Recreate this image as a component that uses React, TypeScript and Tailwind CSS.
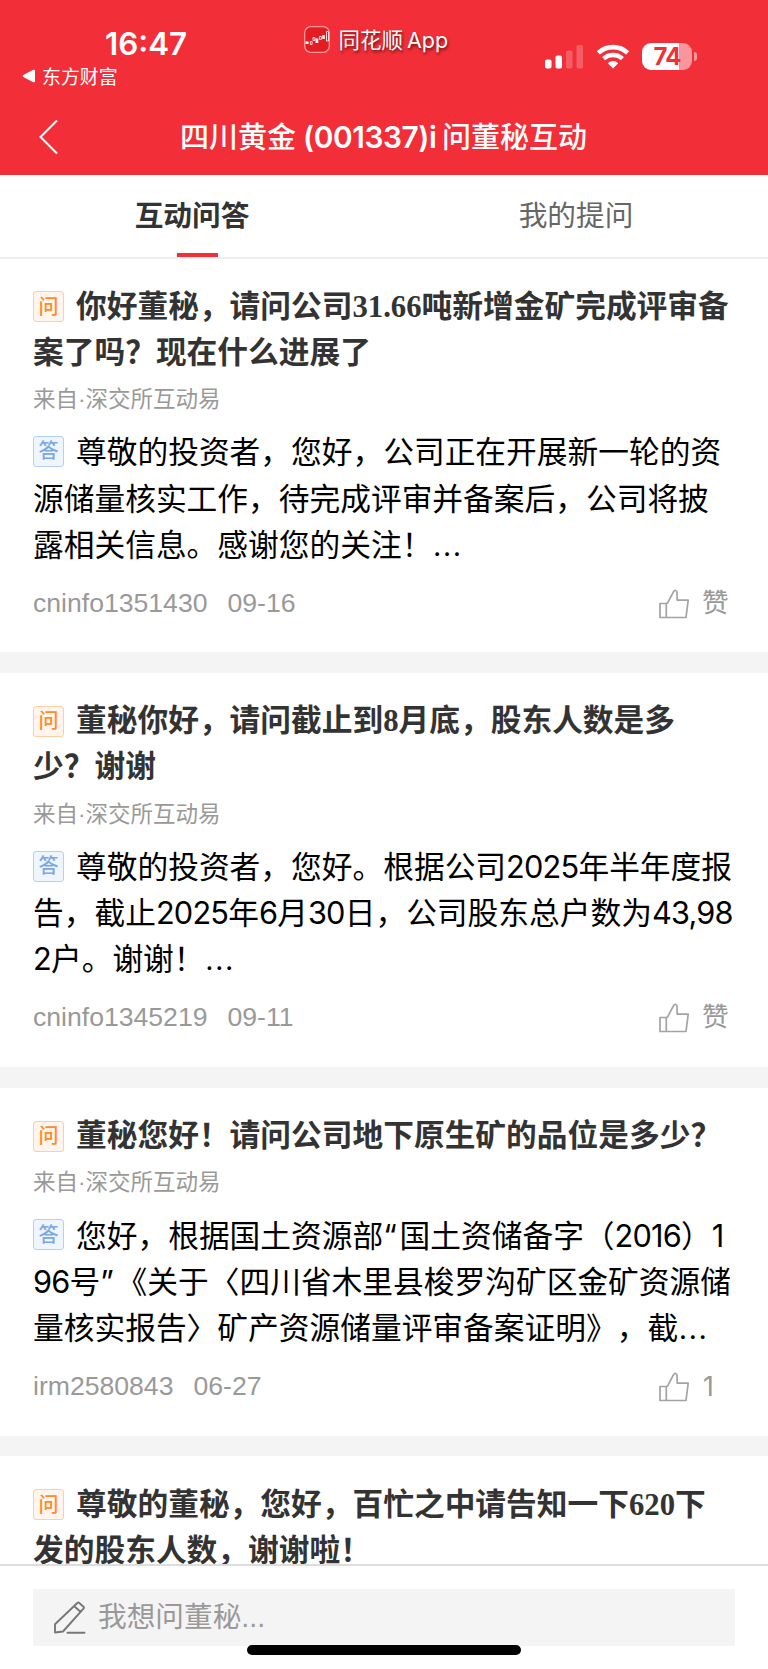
import React from "react";

type Seg = string | { n: string };
type Item = {
  q: string[];
  a?: Seg[][];
  user?: string;
  date?: string;
  likes?: string;
};

const items: Item[] = [
  {
    q: ["你好董秘，请问公司31.66吨新增金矿完成评审备", "案了吗？现在什么进展了"],
    a: [
      ["尊敬的投资者，您好，公司正在开展新一轮的资"],
      ["源储量核实工作，待完成评审并备案后，公司将披"],
      ["露相关信息。感谢您的关注！", { n: "…" }],
    ],
    user: "cninfo1351430",
    date: "09-16",
    likes: "赞",
  },
  {
    q: ["董秘你好，请问截止到8月底，股东人数是多", "少？谢谢"],
    a: [
      ["尊敬的投资者，您好。根据公司", { n: "2025" }, "年半年度报"],
      ["告，截止", { n: "2025" }, "年", { n: "6" }, "月", { n: "30" }, "日，公司股东总户数为", { n: "43,98" }],
      [{ n: "2" }, "户。谢谢！", { n: "…" }],
    ],
    user: "cninfo1345219",
    date: "09-11",
    likes: "赞",
  },
  {
    q: ["董秘您好！请问公司地下原生矿的品位是多少？"],
    a: [
      ["您好，根据国土资源部", { n: "“" }, "国土资储备字（", { n: "2016" }, "）", { n: "1" }],
      [{ n: "96" }, "号", { n: "”" }, "《关于〈四川省木里县梭罗沟矿区金矿资源储"],
      ["量核实报告〉矿产资源储量评审备案证明》，截", { n: "…" }],
    ],
    user: "irm2580843",
    date: "06-27",
    likes: "1",
  },
  { q: ["尊敬的董秘，您好，百忙之中请告知一下620下", "发的股东人数，谢谢啦！"] },
];

function Badge({ kind }: { kind: "q" | "a" }) {
  const tone =
    kind === "q"
      ? "border-[#ffcfa3] bg-[#fff5ec] text-[#ff8a2b]"
      : "border-[#b5d0f4] bg-[#eff5fd] text-[#7aa7e6]";
  return (
    <span
      className={`mr-[12px] flex h-[31px] w-[31px] shrink-0 items-center justify-center rounded-[3px] border pb-[2px] text-[20px] leading-none font-medium font-['Noto_Sans_CJK_SC',sans-serif] ${tone}`}
    >
      {kind === "q" ? "问" : "答"}
    </span>
  );
}

function Latin({ text }: { text: string }) {
  const style =
    text === "…"
      ? "text-[35px] leading-none font-light"
      : text === "“" || text === "”"
        ? "tracking-[2.8px]"
        : "tracking-[-0.8px]";
  return <span className={`font-['Inter',sans-serif] ${style}`}>{text}</span>;
}

function Thumb() {
  return (
    <svg width="31" height="30" viewBox="0 0 31 30" fill="none" stroke="#a3a3a3" strokeWidth="1.7" strokeLinejoin="round">
      <path d="M1 14.500h6.300v14H1zM7.300 14.500l1.500-.8 5.600-10.800c1.200-2.300 3.600-1.700 3.600.6l.2 7.700H29.200l-2.200 17.300H7.300" />
    </svg>
  );
}

function Card({ item }: { item: Item }) {
  return (
    <article className="flex shrink-0 flex-col px-[33px] pt-[25.4px] pb-[25.8px]">
      <h2 className="text-[30.72px] leading-[46.08px] font-bold text-[#333] font-['Liberation_Serif','Noto_Sans_CJK_SC',sans-serif]">
        {item.q.map((l, i) => (
          <span key={i} className="flex h-[46.08px] items-center whitespace-nowrap">
            {i === 0 && <Badge kind="q" />}
            <span>{l}</span>
          </span>
        ))}
      </h2>
      <p className="h-[46px] text-[22.53px] leading-[47px] text-[#999] font-['Liberation_Sans','Noto_Sans_CJK_SC',sans-serif]">
        来自·深交所互动易
      </p>
      {item.a && (
        <div className="mt-[6.6px] text-[30.72px] leading-[44px] text-black">
          {item.a.map((l, i) => (
            <p key={i} className="flex h-[46.08px] items-center whitespace-nowrap">
              {i === 0 && <Badge kind="a" />}
              <span className="h-[46px]">
                {l.map((s, j) => (typeof s === "string" ? s : <Latin key={j} text={s.n} />))}
              </span>
            </p>
          ))}
        </div>
      )}
      {item.user && (
        <footer className="mt-[14px] flex h-[46px] items-center text-[26.6px] text-[#999] font-['Liberation_Sans','Noto_Sans_CJK_SC',sans-serif]">
          <span>{item.user}</span>
          <span className="ml-[20px]">{item.date}</span>
          <span className="ml-auto flex w-[76px] items-center">
            <Thumb />
            {item.likes === "1" ? (
              <span className="ml-[13px] font-['Inter',sans-serif]">1</span>
            ) : (
              <span className="ml-[12px]">{item.likes}</span>
            )}
          </span>
        </footer>
      )}
    </article>
  );
}

export default function App() {
  return (
    <div className="flex h-[1669px] w-[768px] flex-col overflow-hidden bg-white [text-spacing-trim:space-all] font-['Noto_Sans_CJK_SC',sans-serif]">
      <header className="flex h-[175px] shrink-0 flex-col bg-[#f22f38] text-white">
        <div className="flex h-[98px]">
          <div className="flex w-[304px] flex-col">
            <span className="mt-[28px] ml-[105px] h-[32px] text-[31.3px] leading-[32px] font-semibold font-['Inter',sans-serif]">16:47</span>
            <div className="mt-[3px] flex h-[26px] items-center">
              <svg className="ml-[22px]" width="14" height="14" viewBox="0 0 14 14" fill="#fff">
                <path d="M1.300 6.100 11.200.8Q13 .2 13 1.800v10.400q0 1.600-1.800 1L1.300 7.900Q0 7 1.300 6.100Z" />
              </svg>
              <span className="ml-[6px] text-[18.9px] leading-[26px]">东方财富</span>
            </div>
          </div>
          <div className="mt-[24px] flex h-[30px] w-[241px] items-center">
            <svg width="26" height="27" viewBox="0 0 26 27">
              <rect x=".7" y=".7" width="24.600" height="25.600" rx="6" fill="#e31d22" stroke="#f79a9d" strokeWidth="1.300" />
              <g fill="#fff">
                <path d="M1.500 15.500h3v2.500h-3zM11.500 12.500h2.800v4.500H11.500zM18.300 9h2.500v4h-2.500z" />
              </g>
              <g fill="none" stroke="#fff" strokeWidth=".8">
                <path d="M6.300 15.500h1.800v3H6.300zM9 11.500h1.800v3H9zM15.500 10.500h1.800v3h-1.800zM22.500 5.500h2v9.500h-2z" />
              </g>
            </svg>
            <span className="ml-[8.5px] text-[21.5px] leading-[28px] whitespace-nowrap [text-shadow:1px_2px_3px_rgba(60,0,0,0.7)]">
              同花顺
              <span className="ml-[4px] font-['Inter',sans-serif]">App</span>
            </span>
          </div>
          <div className="mt-[43px] flex h-[27px] items-center">
            <svg width="39" height="25" viewBox="0 0 39 25" fill="#fff">
              <rect x="0" y="15.500" width="6.500" height="9" rx="1.800" />
              <rect x="10.500" y="11.500" width="6.500" height="13" rx="1.800" />
              <rect x="21" y="6.500" width="6.500" height="18" rx="1.800" opacity=".22" />
              <rect x="31.500" y="1" width="6.500" height="23.500" rx="1.800" opacity=".22" />
            </svg>
            <svg className="ml-[12px]" width="34" height="25" viewBox="0 0 34 25" fill="none" stroke="#fff">
              <path d="M2.300 8.900a21.500 21.500 0 0 1 29.400 0" strokeWidth="4.600" />
              <path d="M7.600 14.700a13.700 13.700 0 0 1 18.800 0" strokeWidth="4.400" />
              <path d="M17 24.500l-5.200-5.300a7.500 7.500 0 0 1 10.400 0z" fill="#fff" stroke="none" />
            </svg>
            <span className="ml-[12px] flex h-[27px] w-[50px] items-center justify-center rounded-[9px] bg-linear-to-r from-white from-[74%] to-[#f8979b] to-[74%] text-[24px] leading-[26px] font-bold tracking-[-1px] text-[#f22f38] font-['Inter',sans-serif]">
              74
            </span>
            <span className="ml-[2px] h-[9px] w-[3px] rounded-r-[3px] bg-[#f8979b]" />
          </div>
        </div>
        <div className="flex h-[77px] items-center">
          <svg className="ml-[38px]" width="22" height="36" viewBox="0 0 22 36" fill="none" stroke="#fff" strokeWidth="2">
            <path d="M19 1.500 2.500 18 19 34.500" />
          </svg>
          <h1 className="mb-[2px] ml-[120px] text-[29px] leading-[40px] font-medium whitespace-nowrap">
            四川黄金
            <span className="ml-[7px] text-[29.8px] font-semibold tracking-[-0.4px] font-['Inter',sans-serif]">(001337)i</span>
            <span className="ml-[5.5px]">问董秘互动</span>
          </h1>
        </div>
      </header>

      <nav className="flex h-[84px] shrink-0 border-b-2 border-[#eee] text-[28.67px]">
        <div className="flex w-1/2 flex-col items-center">
          <span className="h-[78px] leading-[78px] font-bold text-[#333]">互动问答</span>
          <span className="ml-[10px] h-[4px] w-[41px] bg-[#f22f38]" />
        </div>
        <div className="flex w-1/2 justify-center leading-[78px] text-[#666]">我的提问</div>
      </nav>

      <main className="-mt-[0.7px] flex min-h-0 flex-1 flex-col overflow-hidden">
        {items.map((it, i) => (
          <React.Fragment key={i}>
            {i > 0 && <div className="h-[20.48px] shrink-0 bg-[#f4f4f4]" />}
            <Card item={it} />
          </React.Fragment>
        ))}
      </main>

      <footer className="flex h-[105px] shrink-0 flex-col items-center border-t-2 border-[#ddd] bg-white">
        <div className="mt-[23px] flex h-[57px] w-[702px] shrink-0 items-center bg-[#f4f4f4] pl-[20px]">
          <svg width="34" height="34" viewBox="0 0 34 34" fill="none" stroke="#777" strokeWidth="1.900" strokeLinejoin="round" strokeLinecap="round">
            <path d="M2 31.500v-8.300L24.300 2q1-.9 2 0l4.200 3.800q1 .9 0 1.900L10 30.500zM21.500 5.500l6 5.200M14.500 31.800H31.500" />
          </svg>
          <span className="ml-[11px] text-[28.67px] leading-[57px] text-[#999] font-['Liberation_Sans','Noto_Sans_CJK_SC',sans-serif]">我想问董秘...</span>
        </div>
        <div className="-mt-px h-[10px] w-[274px] shrink-0 rounded-full bg-black" />
      </footer>
    </div>
  );
}
